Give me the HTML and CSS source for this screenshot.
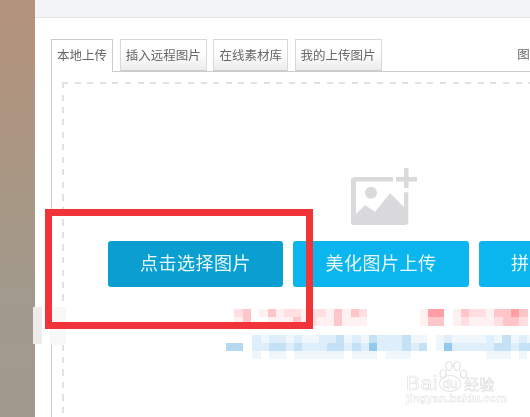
FILE: index.html
```html
<!DOCTYPE html>
<html lang="zh-CN">

<head>
  <meta charset="UTF-8">
  <meta name="viewport" content="width=device-width, initial-scale=1.0">
  <title>多图上传</title>
  <link rel="stylesheet" href="styles.css">
</head>

<body class="page">
  <div class="side"></div>
  <div class="main">
    <div class="topbar"></div>
    <div class="uploader">
      <div class="tabs">
        <div class="tab tab-active">本地上传</div>
        <div class="tab">插入远程图片</div>
        <div class="tab">在线素材库</div>
        <div class="tab">我的上传图片</div>
        <div class="tab-note">图片</div>
      </div>
      <div class="panel">
        <div class="dropzone">
          <svg class="drop-icon" viewBox="0 0 66 57" width="66" height="57">
            <path d="M5 9H42V13.500H5V46L14 37L24 43.700L39 25.300L53 39V24.300H57.300V54C57.300 56 56 57 54 57H3C1 57 0 56 0 54V12C0 10 2 9 5 9Z" fill="#dad9dc"/>
            <circle cx="20" cy="24.700" r="6" fill="#dad9dc"/>
            <rect x="45" y="9" width="21" height="4.500" fill="#dad9dc"/>
            <rect x="53" y="0" width="4.500" height="20" fill="#dad9dc"/>
          </svg>
          <div class="btn-row">
            <div class="btn btn-active">点击选择图片</div>
            <div class="btn">美化图片上传</div>
            <div class="btn">拼接图片上传</div>
          </div>

          <!-- blurred out text in the screenshot -->
          <div class="mosaic-red">
            <div class="mosaic-group">
              <i class="r2"></i><i class="r3"></i><i></i><i class="r1"></i><i class="r3"></i><i class="r1"></i><i class="r2"></i><i class="r2"></i><i class="r1"></i><i class="r2"></i><i class="r2"></i><i class="r1"></i><i class="r3"></i><i class="r1"></i><i class="r3"></i><i class="r2"></i>
              <i class="r1"></i><i class="r3"></i><i></i><i></i><i class="r1"></i><i class="r1"></i><i class="r1"></i><i class="r3"></i><i class="r1"></i><i class="r2"></i><i class="r1"></i><i class="r1"></i><i class="r3"></i><i class="r1"></i><i class="r1"></i><i class="r1"></i>
            </div>
            <div class="mosaic-group">
              <i class="r1"></i><i class="r4"></i><i class="r4"></i><i></i><i class="r1"></i><i class="r3"></i><i class="r2"></i><i class="r2"></i><i class="r1"></i><i class="r3"></i><i class="r3"></i><i class="r4"></i><i class="r3"></i>
              <i class="r1"></i><i class="r3"></i><i class="r3"></i><i></i><i class="r1"></i><i class="r2"></i><i class="r1"></i><i class="r1"></i><i class="r1"></i><i class="r2"></i><i class="r3"></i><i class="r3"></i><i class="r2"></i>
            </div>
          </div>
          <div class="mosaic-blue">
            <div class="mosaic-dash"></div>
            <div class="mosaic-lines">
              <i class="b2"></i><i class="b1"></i><i class="b2"></i><i class="b2"></i><i class="b1"></i><i class="b2"></i><i class="b1"></i><i class="b1"></i><i class="b2"></i><i class="b2"></i><i class="b3"></i><i class="b1"></i><i class="b2"></i><i class="b1"></i><i class="b3"></i><i class="b2"></i><i class="b2"></i><i class="b2"></i><i class="b3"></i><i class="b1"></i><i class="b1"></i><i></i><i class="b1"></i><i class="b2"></i><i class="b1"></i><i class="b1"></i><i class="b1"></i><i class="b1"></i><i class="b2"></i><i class="b1"></i><i class="b3"></i><i class="b1"></i><i class="b2"></i><i class="b1"></i>
              <i class="b2"></i><i class="b2"></i><i class="b3"></i><i class="b3"></i><i class="b2"></i><i class="b3"></i><i class="b2"></i><i class="b2"></i><i class="b2"></i><i class="b3"></i><i class="b3"></i><i class="b2"></i><i class="b3"></i><i class="b2"></i><i class="b4"></i><i class="b2"></i><i class="b2"></i><i class="b2"></i><i class="b3"></i><i class="b2"></i><i class="b3"></i><i></i><i class="b1"></i><i class="b4"></i><i class="b2"></i><i class="b2"></i><i class="b2"></i><i class="b2"></i><i class="b2"></i><i class="b3"></i><i class="b3"></i><i class="b2"></i><i class="b3"></i><i class="b3"></i>
              <i class="b1"></i><i></i><i class="b1"></i><i class="b1"></i><i></i><i class="b1"></i><i class="b1"></i><i class="b1"></i><i class="b1"></i><i class="b1"></i><i class="b1"></i><i></i><i class="b1"></i><i class="b1"></i><i class="b1"></i><i></i><i class="b1"></i><i class="b1"></i><i class="b1"></i><i></i><i></i><i></i><i></i><i></i><i></i><i></i><i></i><i></i><i class="b1"></i><i class="b1"></i><i class="b1"></i><i></i><i class="b1"></i><i></i>
            </div>
          </div>
        </div>
      </div>
    </div>
  </div>

  <!-- pieces lying over the screenshot -->
  <div class="smudge smudge-edge"></div>
  <div class="smudge smudge-corner"></div>
  <div class="highlight"></div>
  <div class="watermark">
    <svg class="wm-paw" viewBox="0 0 30 26" width="30" height="26">
      <g fill="#fff" stroke="#e2e2e2" stroke-width="1.200">
        <ellipse cx="5" cy="14" rx="3" ry="4"/>
        <ellipse cx="11" cy="6" rx="3.200" ry="4.500"/>
        <ellipse cx="19" cy="6" rx="3.200" ry="4.500"/>
        <ellipse cx="25.500" cy="14" rx="3" ry="4"/>
      </g>
    </svg>
    <div class="wm-logo">
      <span class="wm-bai">Bai</span><span class="wm-du">du</span><span class="wm-jy">经验</span>
    </div>
    <div class="wm-url">jingyan.baidu.com</div>
  </div>
</body>

</html>
```

FILE: styles.css
```css
html {
  background-color: #fff;
}

.page {
  margin: 0;
  height: 417px;
  display: flex;
  overflow: hidden;
  position: relative;
  background-color: #fff;
  font-family: "Liberation Sans", "Noto Sans CJK SC", sans-serif;
  filter: blur(0.400px);
}

.side {
  width: 35px;
  flex-shrink: 0;
  background: linear-gradient(180deg, #b4937c 0%, #ab9682 35%, #a29a8c 70%, #a09a8e 100%);
}

.main {
  flex: 1;
  min-width: 0;
  overflow: hidden;
  background-color: #fff;
}

.topbar {
  height: 17px;
  background-color: #f3f4f7;
  border-bottom: 1px solid #e6e6e8;
}

.uploader {
  width: 700px;
  margin: 21px 0 0 16px;
}

.tabs {
  display: flex;
  gap: 6.700px;
  height: 32px;
  border-bottom: 1px solid #ccc;
}

.tab {
  height: 30px;
  line-height: 32px;
  padding: 0 5px;
  font-size: 12.500px;
  color: #666;
  white-space: nowrap;
  border: 1px solid #d8d8d8;
  border-bottom: 1px solid #ccc;
  background: linear-gradient(180deg, #fff 40%, #ececee 100%);
}

.tab-active {
  height: 32px;
  border-color: #ccc;
  border-bottom: none;
  background: #fff;
}

.tab-note {
  margin-left: 129px;
  line-height: 32px;
  font-size: 12.500px;
  color: #666;
}

.panel {
  border-left: 1px solid #ccc;
  padding: 10px 0 0 10px;
  height: 340px;
}

.dropzone {
  width: 638px;
  height: 340px;
  padding-top: 86px;
  display: flex;
  flex-direction: column;
  align-items: center;
  background-image:
    repeating-linear-gradient(90deg, #e2e2e4 0 6px, transparent 6px 12.600px),
    repeating-linear-gradient(180deg, #e2e2e4 0 6px, transparent 6px 12.500px);
  background-size: 100% 2px, 2px 100%;
  background-repeat: no-repeat;
}

.drop-icon {
  display: block;
  flex-shrink: 0;
  margin-left: 6px;
}

.btn-row {
  display: flex;
  gap: 10px;
  margin-top: 16px;
}

.btn {
  width: 175.500px;
  height: 46px;
  line-height: 46px;
  text-align: center;
  font-size: 18px;
  letter-spacing: 0.500px;
  color: #e6f8fd;
  border-radius: 3px;
  background-color: #0bb5ee;
}

.btn-active {
  background-color: #0a9fd0;
}

.mosaic-red {
  display: flex;
  gap: 52px;
  margin-top: 22px;
}

.mosaic-group {
  display: grid;
  grid-auto-flow: row;
  grid-template-columns: repeat(auto-fill, 8.330px);
  grid-auto-rows: 8.300px;
}

.mosaic-group:first-child {
  width: 133.300px;
}

.mosaic-group:last-child {
  width: 108.300px;
}

.mosaic-blue {
  display: flex;
  align-items: center;
  gap: 9px;
  margin-top: 9px;
}

.mosaic-dash {
  width: 17px;
  height: 8px;
  background-color: #b4d9f1;
}

.mosaic-lines {
  width: 283.300px;
  display: grid;
  grid-template-columns: repeat(34, 8.330px);
  grid-auto-rows: 8px;
}

.r1 { background-color: #fff0f1; }
.r2 { background-color: #ffdfe1; }
.r3 { background-color: #ffc6ca; }
.r4 { background-color: #ff9fa5; }

.b1 { background-color: #eff7fd; }
.b2 { background-color: #deeefa; }
.b3 { background-color: #c4e1f5; }
.b4 { background-color: #93c9ee; }

.highlight {
  position: absolute;
  left: 45px;
  top: 209px;
  width: 268px;
  height: 120px;
  box-sizing: border-box;
  border: 7px solid #f0343a;
}

.smudge {
  position: absolute;
}

.smudge-edge {
  left: 33px;
  top: 307px;
  width: 9px;
  height: 37px;
  background-color: #eeebea;
}

.smudge-corner {
  left: 50px;
  top: 307px;
  width: 16px;
  height: 38px;
  background-color: #f9f8f9;
}

.watermark {
  position: absolute;
  left: 406px;
  top: 360px;
  width: 100px;
  height: 48px;
}

.wm-paw {
  position: absolute;
  left: 32px;
  top: 0;
}

.wm-logo {
  position: absolute;
  left: 0;
  top: 11px;
  display: flex;
  align-items: center;
  white-space: nowrap;
}

.wm-bai {
  font-size: 21px;
  letter-spacing: 0.500px;
  color: #fff;
  -webkit-text-stroke: 0.600px #dcdcdc;
}

.wm-du {
  margin-left: 1px;
  padding: 0 3px;
  font-size: 13px;
  color: #fff;
  border: 1px solid #e2e2e2;
  border-radius: 50%;
  -webkit-text-stroke: 0.500px #dcdcdc;
}

.wm-jy {
  margin-left: 3px;
  font-size: 15px;
  color: #fff;
  -webkit-text-stroke: 0.500px #d8d8d8;
}

.wm-url {
  position: absolute;
  left: 0;
  top: 32px;
  font-size: 11.500px;
  font-weight: bold;
  white-space: nowrap;
  color: #fff;
  -webkit-text-stroke: 0.400px #dedede;
}
```
